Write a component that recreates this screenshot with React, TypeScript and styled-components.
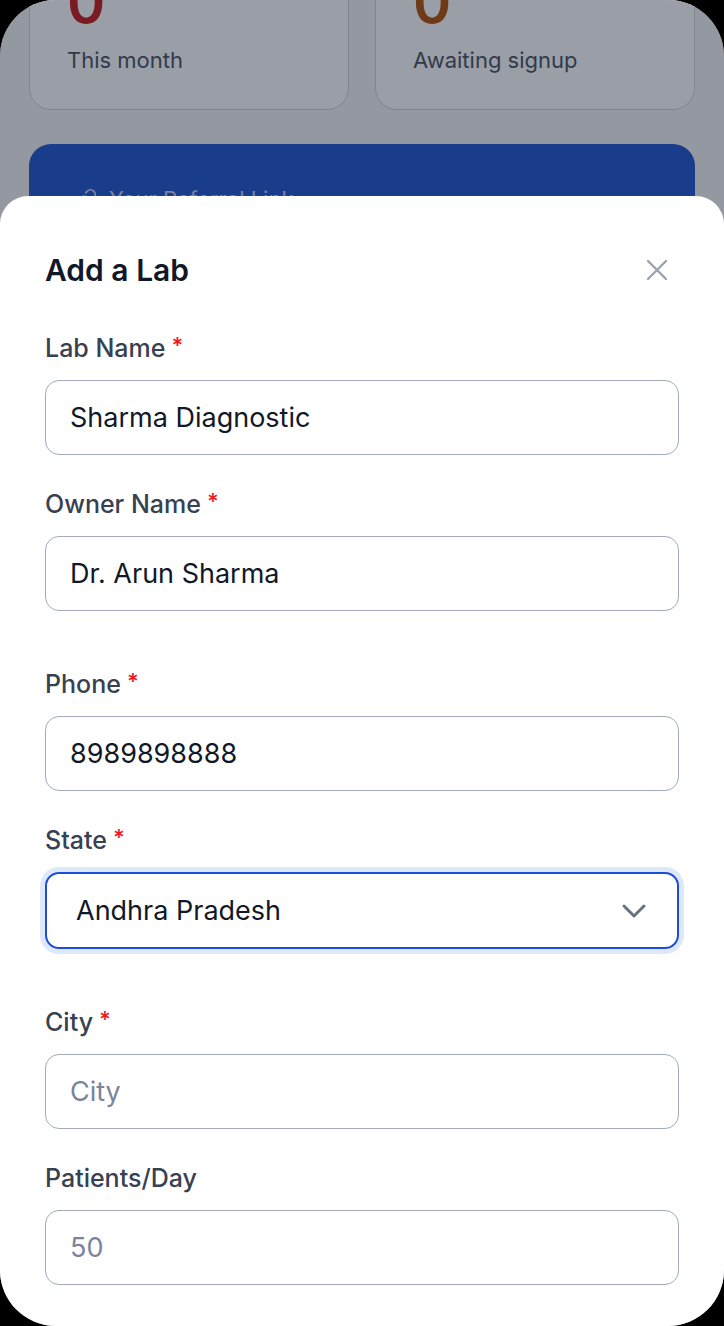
import styled, { createGlobalStyle } from "styled-components";

const GlobalStyle = createGlobalStyle`
  * {
    box-sizing: border-box;
  }
  body {
    margin: 0;
    background: #000;
    font-family: Inter, "Noto Sans", "Liberation Sans", sans-serif;
  }
`;

const Frame = styled.div`
  width: 724px;
  height: 1326px;
  background: #000;
`;

const Screen = styled.div`
  position: relative;
  height: 100%;
  border-radius: 56px;
  overflow: hidden;
  background: #f3f4f6;
`;

const Page = styled.div`
  padding: 0 29px;
`;

const StatGrid = styled.div`
  display: grid;
  grid-template-columns: 1fr 1fr;
  gap: 26px;
  margin-top: -60px;
`;

const StatCard = styled.div`
  height: 170px;
  padding: 29px 37px 0;
  background: #fff;
  border: 1.5px solid #cfd3da;
  border-radius: 22px;
  display: flex;
  flex-direction: column;
`;

const StatValue = styled.div<{ $color: string }>`
  font-size: 58px;
  line-height: 64px;
  font-weight: 600;
  color: ${(p) => p.$color};
`;

const StatLabel = styled.div`
  margin-top: 11px;
  font-size: 22px;
  line-height: 30px;
  color: #4b5563;
`;

const ReferralCard = styled.div`
  margin-top: 34px;
  height: 220px;
  padding: 40px 46px;
  border-radius: 22px;
  background: #2156d0;
`;

const ReferralTitle = styled.div`
  display: flex;
  align-items: center;
  gap: 12px;
  font-size: 22px;
  line-height: 30px;
  color: rgba(255, 255, 255, 0.75);
`;

const Overlay = styled.div`
  position: absolute;
  inset: 0;
  background: rgba(15, 23, 42, 0.42);
`;

const Sheet = styled.div`
  position: absolute;
  top: 196px;
  left: 0;
  right: 0;
  bottom: 0;
  background: #fff;
  border-radius: 28px 28px 0 0;
  padding: 50px 45px 0;
`;

const SheetHeader = styled.div`
  height: 48px;
  display: flex;
  align-items: center;
  justify-content: space-between;
`;

const Title = styled.h2`
  margin: 0;
  font-size: 30px;
  font-weight: 600;
  color: #111827;
`;

const CloseButton = styled.button`
  width: 44px;
  height: 44px;
  padding: 0;
  border: none;
  background: none;
  display: flex;
  align-items: center;
  justify-content: center;
  cursor: pointer;
`;

const Form = styled.form`
  margin-top: 38px;
  display: flex;
  flex-direction: column;
  gap: 33px;
`;

const Field = styled.div<{ $extra?: boolean }>`
  display: flex;
  flex-direction: column;
  margin-bottom: ${(p) => (p.$extra ? "24px" : "0")};
`;

const Label = styled.label`
  display: flex;
  align-items: flex-start;
  margin-bottom: 16px;
  font-size: 25px;
  line-height: 32px;
  font-weight: 500;
  color: #374151;
`;

const Required = styled.span`
  margin-left: 6px;
  font-size: 22px;
  line-height: 26px;
  font-weight: 600;
  color: #ef1b1b;
`;

const TextInput = styled.input`
  width: 100%;
  height: 75px;
  padding: 0 24px;
  border: 1.5px solid #a3a9bd;
  border-radius: 14px;
  font-family: inherit;
  font-size: 27px;
  color: #111827;
  background: #fff;
  outline: none;

  &::placeholder {
    color: #7a849c;
  }
`;

const SelectBox = styled.button`
  width: 100%;
  height: 77px;
  padding: 0 30px 0 29px;
  border: 2px solid #1d4ed8;
  border-radius: 14px;
  box-shadow: 0 0 0 5px #dde8fd;
  background: #fff;
  display: flex;
  align-items: center;
  justify-content: space-between;
  font-family: inherit;
  font-size: 27px;
  color: #111827;
  text-align: left;
`;

const fields = [
  { label: "Lab Name", value: "Sharma Diagnostic", required: true },
  { label: "Owner Name", value: "Dr. Arun Sharma", required: true, extra: true },
  { label: "Phone", value: "8989898888", required: true },
];

const lowerFields = [
  { label: "City", placeholder: "City", required: true },
  { label: "Patients/Day", placeholder: "50", required: false },
];

function App() {
  return (
    <Frame>
      <GlobalStyle />
      <Screen>
        <Page>
          <StatGrid>
            <StatCard>
              <StatValue $color="#c81e1e">0</StatValue>
              <StatLabel>This month</StatLabel>
            </StatCard>
            <StatCard>
              <StatValue $color="#b45309">0</StatValue>
              <StatLabel>Awaiting signup</StatLabel>
            </StatCard>
          </StatGrid>
          <ReferralCard>
            <ReferralTitle>
              <svg width="22" height="22" viewBox="0 0 24 24" fill="none" stroke="currentColor" strokeWidth="2" strokeLinecap="round" strokeLinejoin="round">
                <path d="M10 13a5 5 0 0 0 7.54.54l3-3a5 5 0 0 0-7.07-7.07l-1.72 1.71" />
                <path d="M14 11a5 5 0 0 0-7.54-.54l-3 3a5 5 0 0 0 7.07 7.07l1.71-1.71" />
              </svg>
              Your Referral Link
            </ReferralTitle>
          </ReferralCard>
        </Page>
        <Overlay />
        <Sheet>
          <SheetHeader>
            <Title>Add a Lab</Title>
            <CloseButton type="button" aria-label="Close">
              <svg width="22" height="22" viewBox="0 0 22 22" fill="none" stroke="#9ca3af" strokeWidth="2.4" strokeLinecap="round">
                <path d="M2 2L20 20M20 2L2 20" />
              </svg>
            </CloseButton>
          </SheetHeader>
          <Form onSubmit={(e) => e.preventDefault()}>
            {fields.map((f) => (
              <Field key={f.label} $extra={f.extra}>
                <Label>
                  {f.label}
                  {f.required && <Required>*</Required>}
                </Label>
                <TextInput defaultValue={f.value} />
              </Field>
            ))}
            <Field $extra>
              <Label>
                State<Required>*</Required>
              </Label>
              <SelectBox type="button">
                Andhra Pradesh
                <svg width="26" height="16" viewBox="0 0 26 16" fill="none" stroke="#6b7280" strokeWidth="3" strokeLinecap="round" strokeLinejoin="round">
                  <path d="M3 3L13 13L23 3" />
                </svg>
              </SelectBox>
            </Field>
            {lowerFields.map((f) => (
              <Field key={f.label}>
                <Label>
                  {f.label}
                  {f.required && <Required>*</Required>}
                </Label>
                <TextInput placeholder={f.placeholder} />
              </Field>
            ))}
          </Form>
        </Sheet>
      </Screen>
    </Frame>
  );
}

export default App;
